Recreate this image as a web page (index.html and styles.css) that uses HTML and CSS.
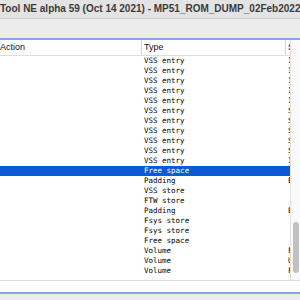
FILE: index.html
```html
<!DOCTYPE html>
<html lang="en">
<head>
  <meta charset="UTF-8">
  <title>UEFITool NE</title>
  <link rel="stylesheet" href="styles.css">
</head>
<body>
<div class="window">
  <div class="titlebar">Tool NE alpha 59 (Oct 14 2021) - MP51_ROM_DUMP_02Feb2022.bin</div>
  <div class="toolbar"></div>
  <div class="tree">
    <div class="tree-body">
      <div class="table">
        <div class="header">
          <div class="hcell col-action">Action</div>
          <div class="hcell col-type">Type</div>
          <div class="hcell col-sub">Subtype</div>
        </div>
        <div id="rows"></div>
      </div>
      <div class="scrollbar"><div class="thumb"></div></div>
    </div>
    <div class="hscroll"></div>
  </div>
  <div class="statusbar"></div>
</div>
<script>
  const rows = [
    ["VSS entry", "I"], ["VSS entry", "I"], ["VSS entry", "I"], ["VSS entry", "I"],
    ["VSS entry", "I"], ["VSS entry", "S"], ["VSS entry", "S"], ["VSS entry", "S"],
    ["VSS entry", "S"], ["VSS entry", "S"], ["VSS entry", "I"],
    ["Free space", "", true], ["Padding", "E"], ["VSS store", ""], ["FTW store", ""],
    ["Padding", "E"], ["Fsys store", ""], ["Fsys store", ""], ["Free space", ""],
    ["Volume", "F"], ["Volume", "U"], ["Volume", "F"]
  ];
  const list = document.getElementById("rows");
  rows.forEach(([type, sub, selected]) => {
    list.innerHTML += `
      <div class='row${selected ? " selected" : ""}'>
        <div class='cell col-action'></div>
        <div class='cell col-type'>${type}</div>
        <div class='cell col-sub'>${sub}</div>
      </div>`;
  });
</script>
</body>
</html>
```

FILE: styles.css
```css
* { box-sizing: border-box; }
body {
  margin: 0;
  background: #ececec;
  font-family: 'Liberation Sans', Arial, sans-serif;
}
.window {
  width: 300px;
  height: 300px;
  overflow: hidden;
  display: flex;
  flex-direction: column;
}
.titlebar {
  height: 19px;
  line-height: 18px;
  background: #e3e3e3;
  border-bottom: 1px solid #cdcdcd;
  color: #3b3b3b;
  font-weight: bold;
  font-size: 10px;
  white-space: nowrap;
  overflow: hidden;
}
.toolbar {
  height: 19px;
  background: #ececec;
}
.tree {
  background: #fff;
  border-top: 2px solid #86a5e4;
  border-bottom: 2px solid #86a5e4;
  display: flex;
  flex-direction: column;
}
.tree-body {
  display: flex;
  height: 241px;
  border-bottom: 1px solid #dcdcdc;
}
.table {
  width: 291px;
  border-right: 1px solid #e2e2e2;
  overflow: hidden;
}
.header {
  display: flex;
  height: 16px;
  border-bottom: 1px solid #dedede;
  font-size: 9px;
  color: #111;
}
.hcell {
  line-height: 15px;
  white-space: nowrap;
  overflow: hidden;
}
.hcell.col-action,
.hcell.col-type {
  border-right: 1px solid #d4d4d4;
}
.col-action { width: 142px; }
.col-type { width: 144px; padding-left: 2px; }
.col-sub { flex: 1; padding-left: 2px; }
.row {
  display: flex;
  height: 10px;
  font-family: 'DejaVu Sans Mono', monospace;
  font-size: 7.5px;
  line-height: 10px;
  color: #000;
}
.row .cell {
  white-space: nowrap;
  overflow: hidden;
}
.row .col-action { width: 142px; }
.row .col-type { width: 144px; }
.row.selected {
  background: #0b5ad3;
  color: #fff;
}
.scrollbar {
  flex: 1;
  position: relative;
  background: #fafafa;
}
.thumb {
  position: absolute;
  left: 2px;
  right: 1px;
  top: 182px;
  height: 51px;
  border-radius: 4px;
  background: #c1c1c1;
}
.hscroll {
  height: 11px;
}
.statusbar {
  flex: 1;
  background: #ececec;
}
```
